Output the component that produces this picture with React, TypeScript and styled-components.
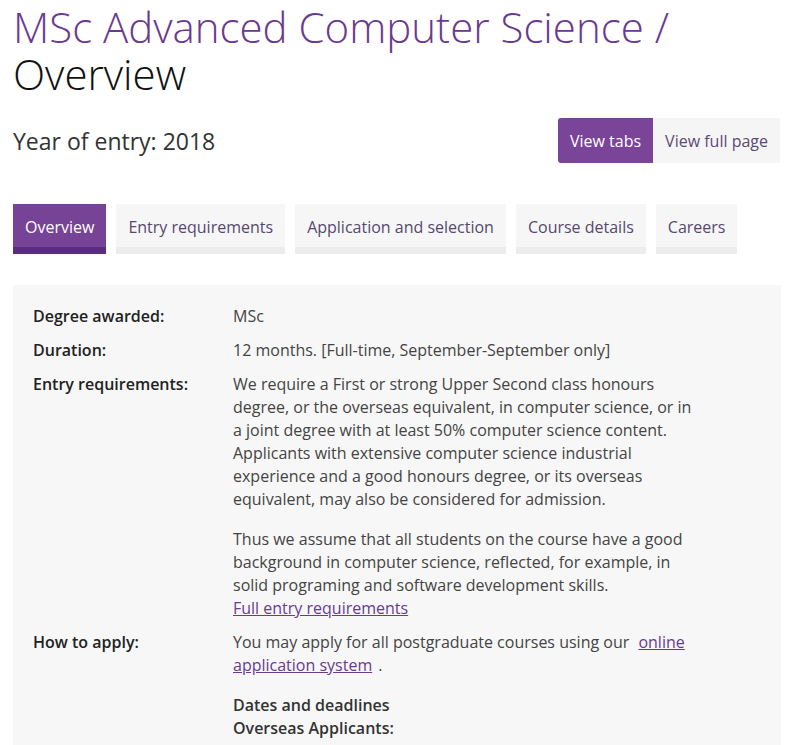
import React from "react";
import styled, { createGlobalStyle } from "styled-components";

const GlobalStyle = createGlobalStyle`
  html, body { margin: 0; padding: 0; background: #ffffff; }
  body { font-family: "Open Sans", "Liberation Sans", Arial, sans-serif; }
  * { box-sizing: border-box; }
`;

const Page = styled.div`
  padding: 0 7px 0 13px;
  width: 788px;
`;

const Title = styled.h1`
  margin: 3px 0 0 0;
  font-size: 42px;
  line-height: 47px;
  font-weight: 300;
  color: #6a3a91;
`;

const Sub = styled.span`
  display: block;
  color: #111111;
`;

const HeaderRow = styled.div`
  margin-top: 21px;
  display: flex;
  align-items: center;
  justify-content: space-between;
  height: 45px;
`;

const Year = styled.h2`
  margin: 0;
  font-size: 23px;
  font-weight: 400;
  color: #333333;
  line-height: 30px;
`;

const Toggle = styled.div`
  display: flex;
  margin-right: 1px;
`;

const ToggleButton = styled.a<{ $active?: boolean }>`
  display: flex;
  align-items: center;
  height: 45px;
  padding: 0 12px;
  font-size: 16px;
  text-decoration: none;
  background: ${(p) => (p.$active ? "#7a4499" : "#f5f5f6")};
  color: ${(p) => (p.$active ? "#ffffff" : "#5b4a75")};
  border-radius: ${(p) => (p.$active ? "3px 0 0 3px" : "0")};
`;

const Tabs = styled.nav`
  margin-top: 41px;
  display: flex;
  gap: 10px;
`;

const Tab = styled.a<{ $active?: boolean }>`
  display: block;
  padding: 12px 12px 8px;
  font-size: 16px;
  line-height: 23px;
  text-decoration: none;
  background: ${(p) => (p.$active ? "#774396" : "#f6f6f6")};
  color: ${(p) => (p.$active ? "#ffffff" : "#574870")};
  border-bottom: 7px solid ${(p) => (p.$active ? "#5a2b7e" : "#ececec")};
`;

const Panel = styled.div`
  margin-top: 31px;
  background: #f7f7f7;
  padding: 20px 20px 20px;
`;

const Row = styled.div`
  display: grid;
  grid-template-columns: 200px 460px;
  margin-bottom: 11px;
  font-size: 16px;
  line-height: 23px;
`;

const Label = styled.div`
  font-weight: 600;
  color: #222222;
`;

const Value = styled.div`
  color: #444444;
`;

const Para = styled.p`
  margin: 0 0 17px 0;
  &:last-child { margin-bottom: 0; }
`;

const Strong = styled.span`
  display: block;
  font-weight: 600;
  color: #333333;
`;

const Link = styled.a<{ $padLeft?: boolean }>`
  color: #6a3a91;
  text-decoration: underline;
  margin-left: ${(p) => (p.$padLeft ? "5px" : "0")};
`;

const Dot = styled.span`
  margin-left: 6px;
`;

export default function App() {
  return (
    <>
      <GlobalStyle />
      <Page>
        <Title>
          MSc Advanced Computer Science /
          <Sub>Overview</Sub>
        </Title>
        <HeaderRow>
          <Year>Year of entry: 2018</Year>
          <Toggle>
            <ToggleButton $active>View tabs</ToggleButton>
            <ToggleButton>View full page</ToggleButton>
          </Toggle>
        </HeaderRow>
        <Tabs>
          <Tab $active>Overview</Tab>
          <Tab>Entry requirements</Tab>
          <Tab>Application and selection</Tab>
          <Tab>Course details</Tab>
          <Tab>Careers</Tab>
        </Tabs>
        <Panel>
          <Row>
            <Label>Degree awarded:</Label>
            <Value>MSc</Value>
          </Row>
          <Row>
            <Label>Duration:</Label>
            <Value>12 months. [Full-time, September-September only]</Value>
          </Row>
          <Row>
            <Label>Entry requirements:</Label>
            <Value>
              <Para>
                We require a First or strong Upper Second class honours degree, or the overseas
                equivalent, in computer science, or in a joint degree with at least 50% computer
                science content. Applicants with extensive computer science industrial experience
                and a good honours degree, or its overseas equivalent, may also be considered for
                admission.
              </Para>
              <Para>
                Thus we assume that all students on the course have a good background in computer
                science, reflected, for example, in solid programing and software development
                skills.
                <br />
                <Link>Full entry requirements</Link>
              </Para>
            </Value>
          </Row>
          <Row>
            <Label>How to apply:</Label>
            <Value>
              <Para>
                You may apply for all postgraduate courses using our{" "}
                <Link $padLeft>online application system</Link>
                <Dot>.</Dot>
              </Para>
              <Para>
                <Strong>Dates and deadlines</Strong>
                <Strong>Overseas Applicants:</Strong>
              </Para>
            </Value>
          </Row>
        </Panel>
      </Page>
    </>
  );
}
